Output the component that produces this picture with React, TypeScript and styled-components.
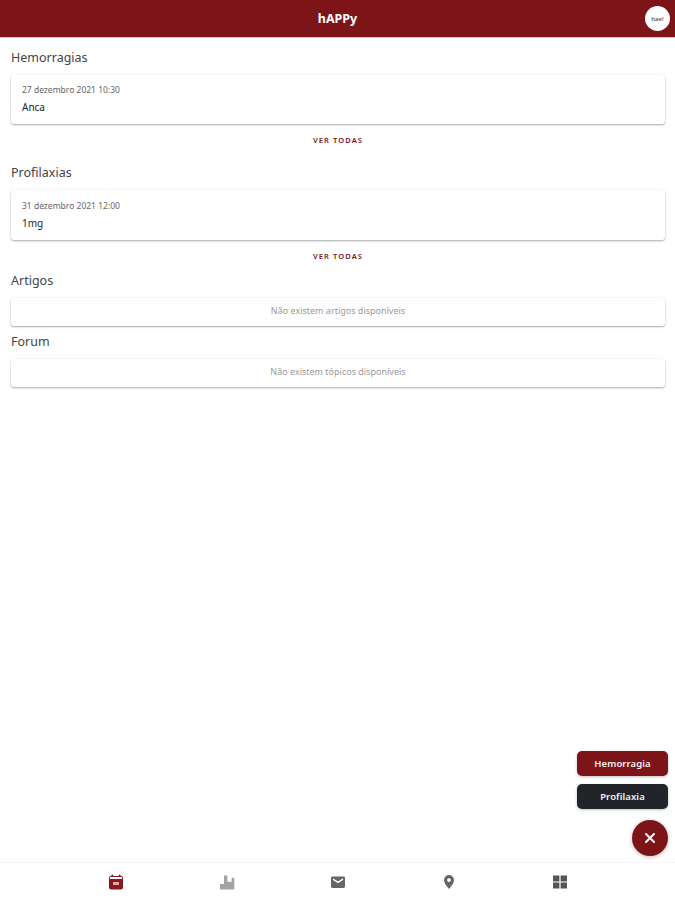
import React from "react";
import styled, { createGlobalStyle } from "styled-components";

const Global = createGlobalStyle`
  html, body { margin: 0; padding: 0; background: #fff; }
  body { font-family: "Noto Sans", "Open Sans", sans-serif; }
  #root { height: 900px; }
`;

const Page = styled.div`
  position: relative;
  width: 675px;
  height: 900px;
  display: flex;
  flex-direction: column;
  overflow: hidden;
  background: #fff;
`;

const Header = styled.header`
  height: 37px;
  flex: none;
  background: #7d1518;
  border-bottom: 1px solid #e6b9ba;
  display: flex;
  align-items: center;
  justify-content: center;
  position: relative;
`;

const Title = styled.h1`
  margin: 0;
  color: #fff;
  font-size: 12.5px;
  font-weight: 700;
`;

const Avatar = styled.div`
  position: absolute;
  right: 5px;
  top: 6px;
  width: 25px;
  height: 25px;
  border-radius: 50%;
  background: #fff;
  display: flex;
  align-items: center;
  justify-content: center;
  color: #6b5560;
  font-size: 6px;
  font-weight: 600;
`;

const Main = styled.main`
  flex: 1;
  padding: 10px 10px 0 11px;
  display: flex;
  flex-direction: column;
`;

const SectionTitle = styled.h2<{ $top?: number }>`
  margin: ${(p) => p.$top ?? 0}px 0 0;
  height: 19px;
  line-height: 19px;
  font-size: 12.5px;
  font-weight: 400;
  color: #444;
`;

const Card = styled.div<{ $tall?: boolean }>`
  margin-top: 8px;
  background: #fff;
  border-radius: 3px;
  box-shadow: 0 1px 2px rgba(0, 0, 0, 0.32), 0 0 3px rgba(0, 0, 0, 0.05);
  padding: ${(p) => (p.$tall ? 10 : 9)}px 11px 0;
  height: ${(p) => (p.$tall ? 50 : 49)}px;
  box-sizing: border-box;
`;

const DateText = styled.div`
  font-size: 8.5px;
  line-height: 12px;
  color: #666;
`;

const Value = styled.div`
  margin-top: 4px;
  font-size: 10px;
  line-height: 14px;
  color: #222;
`;

const EmptyCard = styled.div`
  margin-top: 8px;
  height: 28px;
  box-sizing: border-box;
  padding-bottom: 3px;
  background: #fff;
  border-radius: 3px;
  box-shadow: 0 1px 2px rgba(0, 0, 0, 0.32), 0 0 3px rgba(0, 0, 0, 0.05);
  display: flex;
  align-items: center;
  justify-content: center;
  font-size: 9px;
  color: #9a9a9a;
`;

const SeeAll = styled.div`
  margin-top: 10px;
  height: 12px;
  line-height: 12px;
  text-align: center;
  font-size: 7.5px;
  font-weight: 600;
  letter-spacing: 1.1px;
  color: #7d1518;
`;

const Fabs = styled.div`
  position: absolute;
  right: 7px;
  bottom: 44px;
  display: flex;
  flex-direction: column;
  align-items: flex-end;
`;

const Action = styled.button<{ $bg: string }>`
  width: 91px;
  height: 25px;
  margin-bottom: 8px;
  border: 0;
  border-radius: 5px;
  background: ${(p) => p.$bg};
  color: #f2f2f2;
  font-family: inherit;
  font-size: 9.5px;
  font-weight: 600;
  letter-spacing: 0.1px;
  box-shadow: 0 1px 3px rgba(0, 0, 0, 0.25);
  padding: 0;
`;

const Fab = styled.button`
  width: 36px;
  height: 36px;
  margin-top: 3px;
  border: 0;
  border-radius: 50%;
  background: #7d1518;
  box-shadow: 0 1px 4px rgba(0, 0, 0, 0.28);
  display: flex;
  align-items: center;
  justify-content: center;
  padding: 0;
`;

const TabBar = styled.nav`
  flex: none;
  box-sizing: border-box;
  height: 38px;
  border-top: 1px solid #f6f6f6;
  display: flex;
  justify-content: center;
  align-items: center;
`;

const Tab = styled.div`
  width: 111px;
  display: flex;
  justify-content: center;
`;

const Icon = styled.svg`
  display: block;
  width: 16px;
  height: 16px;
`;

export default function App() {
  return (
    <Page>
      <Global />
      <Header>
        <Title>hAPPy</Title>
        <Avatar>hae!</Avatar>
      </Header>
      <Main>
        <SectionTitle>Hemorragias</SectionTitle>
        <Card>
          <DateText>27 dezembro 2021 10:30</DateText>
          <Value>Anca</Value>
        </Card>
        <SeeAll>VER TODAS</SeeAll>
        <SectionTitle $top={17}>Profilaxias</SectionTitle>
        <Card $tall>
          <DateText>31 dezembro 2021 12:00</DateText>
          <Value>1mg</Value>
        </Card>
        <SeeAll>VER TODAS</SeeAll>
        <SectionTitle $top={9}>Artigos</SectionTitle>
        <EmptyCard>Não existem artigos disponíveis</EmptyCard>
        <SectionTitle $top={6}>Forum</SectionTitle>
        <EmptyCard>Não existem tópicos disponíveis</EmptyCard>
      </Main>
      <Fabs>
        <Action $bg="#7d1518">Hemorragia</Action>
        <Action $bg="#212529">Profilaxia</Action>
        <Fab aria-label="Fechar">
          <svg width="12" height="12" viewBox="0 0 12 12">
            <path d="M2 2l8 8M10 2l-8 8" stroke="#fff" strokeWidth="2" strokeLinecap="round" />
          </svg>
        </Fab>
      </Fabs>
      <TabBar>
        <Tab>
          <Icon viewBox="0 0 16 16">
            <path fill="#8a1a1e" d="M3 2h10a2 2 0 0 1 2 2v9.5a2 2 0 0 1-2 2H3a2 2 0 0 1-2-2V4a2 2 0 0 1 2-2z" />
            <rect x="3.5" y="0.5" width="1.6" height="3" rx=".8" fill="#8a1a1e" />
            <rect x="10.9" y="0.5" width="1.6" height="3" rx=".8" fill="#8a1a1e" />
            <rect x="2" y="3" width="12" height="2" fill="#fff" />
            <rect x="5" y="8" width="6" height="3" fill="#d9a7a9" />
          </Icon>
        </Tab>
        <Tab>
          <Icon viewBox="0 0 16 16">
            <path fill="#a3a3a3" d="M1 15.5V10h4V1.5h3.3v6.2h4.4v-4h2.6v11.8z" />
          </Icon>
        </Tab>
        <Tab>
          <Icon viewBox="0 0 16 16">
            <path fill="#666" d="M2 2.5h12a1.5 1.5 0 0 1 1 1.4v8.7a1.5 1.5 0 0 1-1.5 1.4h-11A1.5 1.5 0 0 1 1 12.6V3.9a1.5 1.5 0 0 1 1-1.4z" />
            <path fill="none" stroke="#fff" strokeWidth="1.4" d="M3 5.2l5 3.2 5-3.2" />
          </Icon>
        </Tab>
        <Tab>
          <Icon viewBox="0 0 16 16">
            <path fill="#666" fillRule="evenodd" d="M8 1a5 5 0 0 0-5 5c0 3.5 5 9 5 9s5-5.5 5-9a5 5 0 0 0-5-5zm0 3.2a1.9 1.9 0 1 1 0 3.8 1.9 1.9 0 0 1 0-3.8z" />
          </Icon>
        </Tab>
        <Tab>
          <Icon viewBox="0 0 16 16">
            <path fill="#555" d="M1 1.5h6.4v6H1zM8.6 1.5H15v6H8.6zM1 8.6h6.4v6H1zM8.6 8.6H15v6H8.6z" />
          </Icon>
        </Tab>
      </TabBar>
    </Page>
  );
}
